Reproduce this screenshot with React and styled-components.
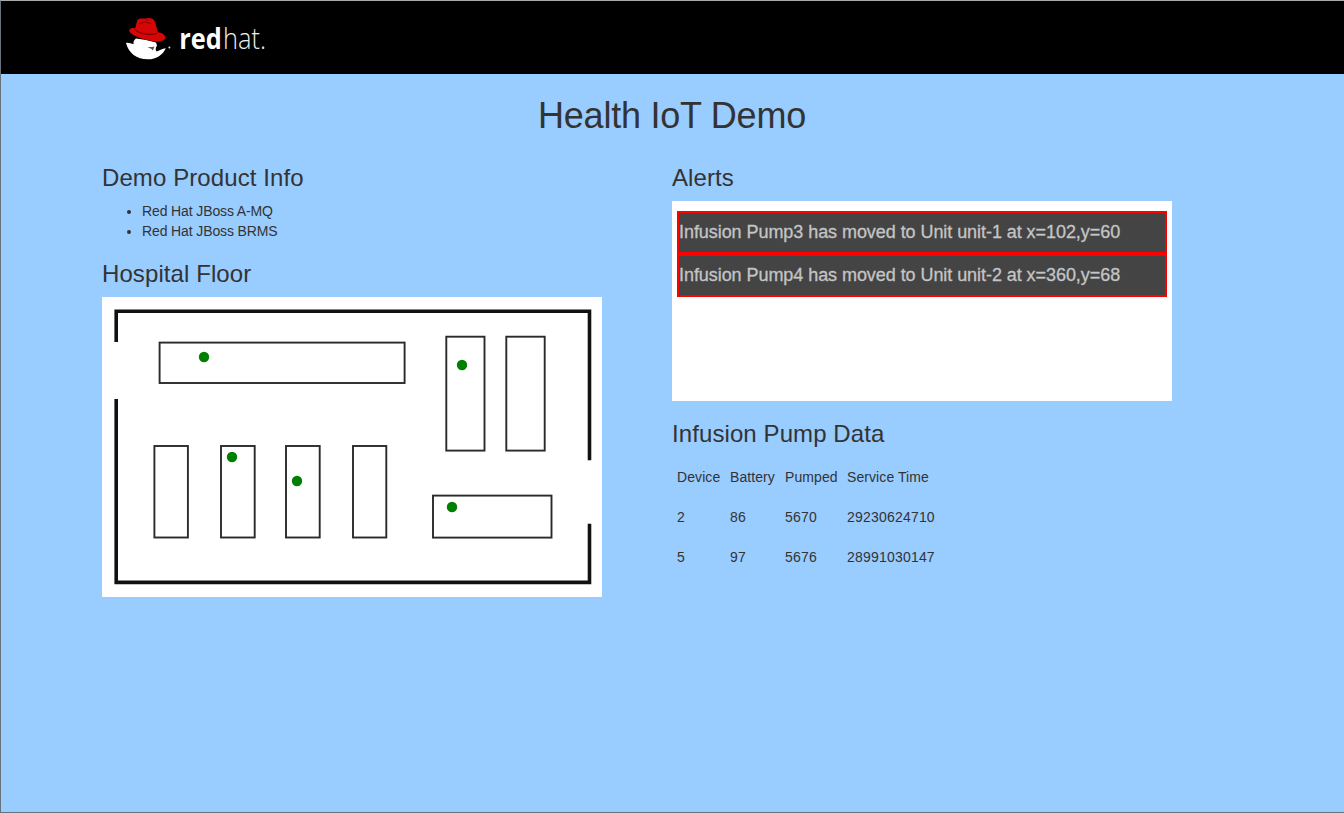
import React from 'react';
import styled, { createGlobalStyle } from 'styled-components';

const GlobalStyle = createGlobalStyle`
  *, *::before, *::after { box-sizing: border-box; }
  body {
    margin: 0;
    background: #99ccff;
    color: #333;
    font: 14px/20px "Liberation Sans", Arial, sans-serif;
  }
`;

const Page = styled.div`
  height: 813px;
  border: solid #68727c;
  border-width: 1px 0 1px 1px;
  border-top-color: #a9acab;
  overflow: hidden;
`;

const Header = styled.header`
  height: 73px;
  padding: 11px 0 0 119px;
  background: #000;
`;

const Logo = styled.svg`
  display: block;
  overflow: visible;
`;

const Container = styled.main`
  width: 1140px;
  margin: 0 0 0 101px;
`;

const Title = styled.h1`
  margin: 0;
  padding-top: 22px;
  height: 69px;
  font-size: 36px;
  line-height: 40px;
  font-weight: 400;
  text-align: center;
  letter-spacing: -0.24px;
`;

const Columns = styled.div`
  display: grid;
  grid-template-columns: 500px 500px;
  column-gap: 70px;
`;

const Heading = styled.h3`
  margin: 0;
  padding-top: ${(p) => (p.$first ? 21 : 19)}px;
  height: ${(p) => (p.$first ? 58 : 56)}px;
  font-size: 24px;
  line-height: 28px;
  font-weight: 400;
  letter-spacing: 0.09px;
`;

const Products = styled.ul`
  margin: 0;
  padding: 0 0 0 40px;
  letter-spacing: -0.12px;
`;

const Floor = styled.svg`
  display: block;
  background: #fff;
`;

const AlertPanel = styled.div`
  height: 200px;
  padding: 10px 5px;
  background: #fff;
`;

const Alert = styled.div`
  height: 43px;
  border: 2px solid #f00;
  background: #444;
  color: #c4c4c4;
  font-size: 18px;
  line-height: 38px;
  letter-spacing: -0.06px;
  -webkit-text-stroke: 0.3px #c4c4c4;
  white-space: nowrap;
`;

const DataTable = styled.table`
  border-collapse: collapse;
  table-layout: fixed;
  width: 270px;
`;

const Cell = styled.td`
  width: ${(p) => p.$width}px;
  height: 40px;
  padding: 0 5px;
  white-space: nowrap;
  letter-spacing: ${(p) => (p.$label ? 0.08 : 0.2)}px;
`;

const rooms = [
  [57.6, 45.6, 245, 40.4],
  [344.3, 39.7, 38.2, 113.9],
  [404.3, 39.7, 38.4, 113.9],
  [52.4, 149, 33.5, 91.5],
  [119, 149, 33.7, 91.5],
  [184, 149, 33.7, 91.5],
  [251, 149, 33.3, 91.5],
  [331, 198.6, 118.5, 42],
];

const pumps = [[102, 60], [360, 68], [130, 160], [195, 184], [350, 210]];

const alerts = [
  'Infusion Pump3 has moved to Unit unit-1 at x=102,y=60',
  'Infusion Pump4 has moved to Unit unit-2 at x=360,y=68',
];

const widths = [53, 55, 62, 100];
const rows = [
  ['Device', 'Battery', 'Pumped', 'Service Time'],
  ['2', '86', '5670', '29230624710'],
  ['5', '97', '5676', '28991030147'],
];

function RedHatLogo() {
  return (
    <Logo width="150" height="52" viewBox="120 12 150 52">
      <path d="M126 43C128 42.4 131 43.4 133.6 44.2C133 42 134 40 136 38.5L146 40L156 42.5L157 45.5C155.8 47.5 155 50 156.6 51.6C159 50.8 162 48.6 165.8 48.2C163 54.5 156.5 59.3 148 59.3C136.5 59.3 128.5 53 126 43Z" fill="#fff" />
      <path d="M147.5 47.2L154.5 46.8L152.8 50.4L151.2 48.8Z" fill="#555" />
      <path d="M137.3 20.2C139.5 17.7 142.5 18.8 145.5 18.5C149 17.2 153.5 18.3 154.7 21L158 32.2C161.5 32.5 164.8 34.5 165.4 37C165.7 40.5 161 41.9 154.5 41.2C145 40.2 132 36.2 129.4 31.5C128.5 28.8 131.5 27.5 135.2 28.2Z" fill="#d40606" />
      <path d="M134.7 29C138 33.2 148 36 157.2 33.3" fill="none" stroke="#680000" strokeWidth="1" />
      <path d="M139 24L144.5 22L151 23.5M146 19L148 21" fill="none" stroke="#8b0000" strokeWidth="1" />
      <circle cx="169.4" cy="47.6" r="1" fill="#ddd" />
      <text x="179.3" y="48.5" fill="#fff" fontFamily="Open Sans, sans-serif" fontSize="29" fontWeight="700" textLength="42.5" lengthAdjust="spacingAndGlyphs">red</text>
      <text x="223" y="48.5" fill="#eee" fontFamily="Open Sans, sans-serif" fontSize="29" fontWeight="300" textLength="43" lengthAdjust="spacingAndGlyphs">hat.</text>
    </Logo>
  );
}

function HospitalFloor() {
  return (
    <Floor width="500" height="300" viewBox="0 0 500 300">
      <g fill="none" stroke="#111" strokeWidth="3.6">
        <path d="M14.2 45V14.2H487.5V163.3" />
        <path d="M14.2 102V285.4H487.5V226.7" />
      </g>
      {rooms.map(([x, y, width, height]) => (
        <rect key={`${x}-${y}`} x={x} y={y} width={width} height={height} fill="none" stroke="#2a2a2a" strokeWidth="1.9" />
      ))}
      {pumps.map(([x, y]) => (
        <circle key={`${x}-${y}`} cx={x} cy={y} r="5.2" fill="#008000" />
      ))}
    </Floor>
  );
}

export default function App() {
  return (
    <Page>
      <GlobalStyle />
      <Header><RedHatLogo /></Header>
      <Container>
        <Title>Health IoT Demo</Title>
        <Columns>
          <section>
            <Heading $first>Demo Product Info</Heading>
            <Products>
              <li>Red Hat JBoss A-MQ</li>
              <li>Red Hat JBoss BRMS</li>
            </Products>
            <Heading>Hospital Floor</Heading>
            <HospitalFloor />
          </section>
          <section>
            <Heading $first>Alerts</Heading>
            <AlertPanel>
              {alerts.map((text) => <Alert key={text}>{text}</Alert>)}
            </AlertPanel>
            <Heading>Infusion Pump Data</Heading>
            <DataTable>
              <tbody>
                {rows.map((row, r) => (
                  <tr key={row[0]}>
                    {row.map((value, i) => (
                      <Cell key={value} $width={widths[i]} $label={r === 0}>{value}</Cell>
                    ))}
                  </tr>
                ))}
              </tbody>
            </DataTable>
          </section>
        </Columns>
      </Container>
    </Page>
  );
}
